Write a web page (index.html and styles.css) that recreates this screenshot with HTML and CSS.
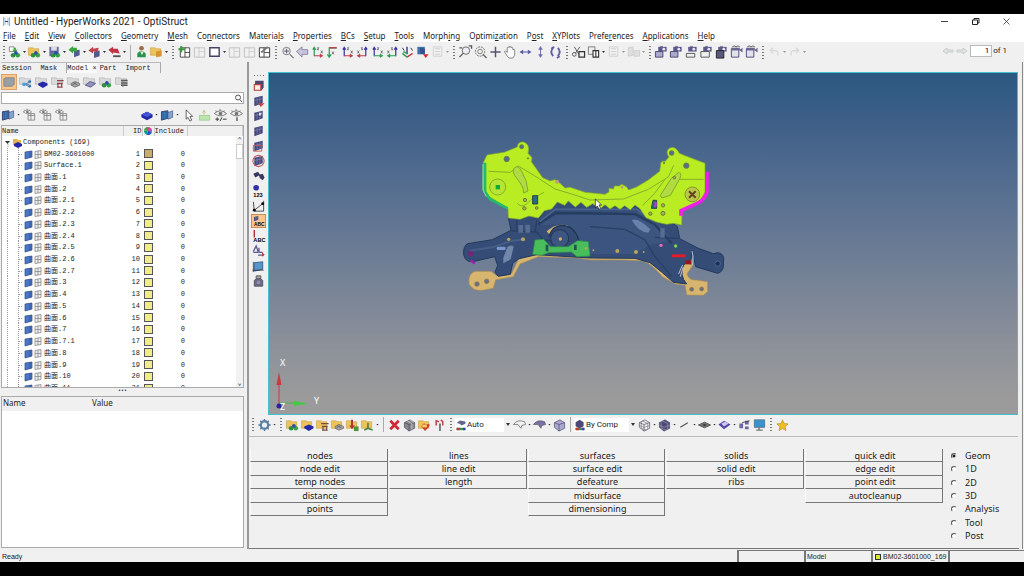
FILE: index.html
```html
<!DOCTYPE html>
<html lang="en">
<head>
<meta charset="utf-8">
<title>Untitled - HyperWorks 2021 - OptiStruct</title>
<link rel="stylesheet" href="styles.css">
</head>
<body>
<div class="app">
  <header class="titlebar">
    <svg class="logo" viewBox="0 0 9 9"><path d="M1.500 0v9M3 1v7M6 1v7M7.500 0v9" stroke="#8fb3da"/><path d="M3 4.500h3" stroke="#243f70"/></svg>
    <h1 class="title">Untitled - HyperWorks 2021 - OptiStruct</h1>
    <div class="window-buttons">
      <button aria-label="Minimize"><svg viewBox="0 0 9 9"><path d="M1 4.500h7" stroke="#444"/></svg></button>
      <button aria-label="Restore"><svg viewBox="0 0 9 9"><path d="M1.500 3h5v4.500h-5zM3 3V1.500h5V6H6.500" fill="none" stroke="#222"/></svg></button>
      <button aria-label="Close"><svg viewBox="0 0 9 9"><path d="M1.500 1.500l6 6m0-6l-6 6" stroke="#333" stroke-width=".8"/></svg></button>
    </div>
  </header>
  <nav class="menubar">
    <button><u>F</u>ile</button><button><u>E</u>dit</button><button><u>V</u>iew</button><button><u>C</u>ollectors</button><button><u>G</u>eometry</button><button><u>M</u>esh</button><button>Co<u>n</u>nectors</button><button>Materia<u>l</u>s</button><button><u>P</u>roperties</button><button><u>B</u>Cs</button><button><u>S</u>etup</button><button><u>T</u>ools</button><button>Morph<u>i</u>ng</button><button>Optimi<u>z</u>ation</button><button>P<u>o</u>st</button><button><u>X</u>YPlots</button><button>Prefe<u>r</u>ences</button><button><u>A</u>pplications</button><button><u>H</u>elp</button>
  </nav>
  <div class="main-toolbar">
    <div class="toolbar" data-tools="| new+ open+ save+ import+ export+ exportred+ / user folder+ | pageadd pagedim window+ pagedim pagedim pageedit | zoomfit back axgr axrg axrg2 axrp axbg axgb axiso cube dim+ | mag magdots cross hand lr ud rot | cut paste+ dim+ dimdb+ | cam1 cam1 cam2 cam3 cam4 vid vid | undo+ redo+"></div>
    <div class="pager">
      <svg viewBox="0 0 26 10"><path d="M5 2L1 5l4 3V6h6V4H5zM21 2l4 3-4 3V6h-6V4h6z" fill="#e3e6e4" stroke="#c6ccc8"/></svg>
      <label><input type="text" value="1" aria-label="Page"> of 1</label>
    </div>
  </div>
  <div class="workspace">
    <aside class="browser">
      <div class="tabs" role="tablist"><button>Session</button><button>Mask</button><button class="active">Model ×</button><button>Part</button><button>Import</button></div>
      <div class="toolbar views" data-tools="boxsel share compg matg meshg surfg ballsg stackg"></div>
      <div class="search"><input type="text" aria-label="Search"><svg viewBox="0 0 9 9"><circle cx="4" cy="3.500" r="2.500" fill="none" stroke="#555"/><path d="M6 5.500L8 8" stroke="#555"/></svg></div>
      <div class="filters">
        <div class="toolbar" data-tools="shell+ eyelist eyelist eyelist"></div>
        <div class="toolbar" data-tools="blue+ shell+ arrow green eyepm eye1"></div>
      </div>
      <div class="tree">
        <table>
          <thead><tr><th class="c-name">Name</th><th class="c-id">ID</th><th class="c-color"><svg viewBox="0 0 9 9" aria-label="Color"><path d="M4.500 4.500V0A4.500 4.500 0 0 1 9 5z" fill="#d743a1"/><path d="M4.500 4.500L9 5A4.500 4.500 0 0 1 3 8.700z" fill="#2556c8"/><path d="M4.500 4.500L3 8.700A4.500 4.500 0 0 1 0 4z" fill="#159d8b"/><path d="M4.500 4.500L0 4A4.500 4.500 0 0 1 4.500 0z" fill="#3fa338"/></svg></th><th class="c-inc">Include</th><th></th></tr></thead>
          <tbody id="rows"></tbody>
        </table>
        <div class="scroll"><span>⌃</span><i></i><span>⌄</span></div>
      </div>
      <div class="split"><span>•••</span></div>
      <div class="props"><div class="props-head"><span>Name</span><span>Value</span></div></div>
    </aside>
    <main class="stage">
      <div class="view-row">
        <div class="toolbar vertical" data-tools="- vbox vcam vp vgrid vredbox vcirc vbinoc vinfo vmeas vabc vredabc vabcd vblue vlock"></div>
        <div class="viewport">
          <svg viewBox="269 73 748 341" role="img" aria-label="Subframe model">
            <g transform="translate(455 130) scale(.333333)">
              <path d="M240 372L190 388L170 430L125 437L108 424L60 424Q38 432 42 462Q55 485 82 481L115 475L122 450L175 440L195 402L250 380L370 384L405 390L505 390L565 393Q590 402 622 440L660 462L690 466L695 495L745 496L758 485V455L724 450Q702 452 696 432L714 405L690 398L560 374Z" fill="#d7b56e" stroke="#a58958" stroke-width="2"/>
              <g fill="#66707f" stroke="#917950" stroke-width="2"><circle cx="66" cy="462" r="7"/><circle cx="95" cy="454" r="7"/><circle cx="710" cy="478" r="6"/><circle cx="740" cy="477" r="6"/></g>
              <path d="M38 341L112 329L168 301L160 262L260 236L300 205H560L640 270L667 290L674 326L730 355L775 371Q800 362 806 383L805 408Q805 424 788 430L722 410L711 362L708 388L686 405Q672 435 695 462L655 457L620 426L585 398L540 385L405 384L245 374L192 386L173 400L166 433L130 439L120 427L128 406L119 380L58 394Q32 400 26 374Q24 348 38 341Z" fill="#344c76" stroke="#22385c" stroke-width="3"/>
              <path d="M250 285L300 245H560L620 290L650 330L585 345L540 372H405L373 341Q360 290 325 284Z" fill="#3b5580"/>
              <path d="M43 362L112 352L168 333L210 328" fill="none" stroke="#465d86" stroke-width="6"/>
              <path d="M250 283L302 249L540 252L600 284L650 340" fill="none" stroke="#263c60" stroke-width="7"/>
              <path d="M255 274L300 238H545L605 275" fill="none" stroke="#49638f" stroke-width="5"/>
              <path d="M165 302L245 306L265 330L370 335M185 270V300M246 270L240 304M405 290L510 298L570 330L600 380L650 440M600 322L670 325" fill="none" stroke="#293f63" stroke-width="4"/>
              <path d="M190 285h14v23h-14zM211 284h14v24h-14zM616 295h13v28h-13z" fill="#566c91"/>
              <path d="M530 270Q550 262 586 298L580 308Q550 307 530 270Z" fill="#6982ab"/>
              <path d="M157 352Q168 342 176 350L167 388L145 400V383Z" fill="#7187aa"/>
              <rect x="125" y="350" width="27" height="10" rx="4" fill="#7997cb"/>
              <path d="M275 304Q302 278 338 286L337 293L281 311Z" fill="#d5b36e"/>
              <path d="M282 320Q292 285 325 286Q365 291 373 341" fill="#344b73" stroke="#1f3453" stroke-width="4"/>
              <circle cx="314" cy="326" r="27" fill="#3d5681" stroke="#1e3355" stroke-width="3"/><circle cx="316" cy="327" r="5" fill="#cbb16f"/>
              <path d="M240 330L266 328L286 350L340 350L368 332L400 335L405 378L366 380L349 366L280 368L261 376L233 373Z" fill="#48bd59" stroke="#289448" stroke-width="2"/>
              <path d="M272 344h8v20h-8zM357 344h8v16h-8z" fill="#274f58"/>
              <path d="M85 98L96 75L120 71L148 67L187 51Q188 35 205 36Q226 42 219 70L231 83L229 95L263 143L285 153L300 149L315 160L330 174L345 172L390 187L450 193L462 186V175L476 177L478 168H493L500 163L514 170L521 180L545 171L580 150L614 124L617 105Q616 91 631 94L642 81Q630 65 643 55Q661 46 673 70L687 76L750 100V187L735 214L681 245L680 285L655 280L635 283L607 277L573 263L555 236L540 225L526 239L509 227L495 238L480 227L465 237L450 224L435 237L413 221L395 232L378 217L361 231L340 213L329 226L307 216L290 237L268 242L250 264L222 258L195 268L160 264L159 235L91 193L84 180Z" fill="#b9ec22" stroke="#86ad29" stroke-width="2"/>
              <path d="M90 98V184L104 207L158 235" fill="none" stroke="#20bb6d" stroke-width="8"/><path d="M84 103V180L94 200" fill="none" stroke="#7ae5a3" stroke-width="3"/>
              <path d="M756 125V186Q750 209 726 220L678 242V257" fill="none" stroke="#ed20eb" stroke-width="11"/>
              <path d="M101 124L166 127L190 108L243 140L300 177L350 192L405 210L505 207L580 178L640 141L656 106M663 148H746M187 220Q202 240 228 209L267 187M563 226L598 191L630 148" fill="none" stroke="#86b02a" stroke-width="3"/>
              <path d="M180 112Q170 121 179 137Q208 170 206 189L219 183Q217 152 199 122Q190 106 180 112ZM670 128Q681 126 675 145L646 196L620 204L616 196L649 145Z" fill="#b2db43" stroke="#83a92a" stroke-width="3"/>
              <circle cx="128" cy="171" r="24" fill="#b7e536" stroke="#86ad2b" stroke-width="3"/><path d="M122 165h13v13h-13z" fill="#0eab35"/>
              <circle cx="712" cy="193" r="22" fill="#bcc749" stroke="#809a27" stroke-width="3"/><path d="M702 184l20 19m0-19l-20 19" stroke="#624224" stroke-width="6"/>
              <g fill="#526c99" stroke="#6c823b" stroke-width="3"><circle cx="155" cy="87" r="8"/><circle cx="200" cy="50" r="6"/><circle cx="650" cy="69" r="7"/><circle cx="694" cy="107" r="8"/><circle cx="219" cy="85" r="2"/><circle cx="627" cy="99" r="2"/></g>
              <path d="M233 197h15v25h-15zM594 211h11v24h-16z" fill="#296b87" stroke="#264742" stroke-width="3"/><path d="M599 216h6v15h-8z" fill="#b13ec4"/>
              <g fill="#b2ab60" stroke="#617d2c" stroke-width="3"><circle cx="210" cy="210" r="5"/><circle cx="208" cy="235" r="5"/><circle cx="245" cy="234" r="4"/><circle cx="624" cy="226" r="5"/><circle cx="586" cy="251" r="5"/><circle cx="624" cy="250" r="6"/><circle cx="658" cy="143" r="4"/></g>
              <g fill="#be9b82"><circle cx="306" cy="155" r="6"/><circle cx="501" cy="172" r="4"/></g>
              <g fill="#b8a55c"><circle cx="161" cy="328" r="5"/><circle cx="204" cy="328" r="6"/><circle cx="393" cy="355" r="4"/><circle cx="487" cy="363" r="6"/><circle cx="543" cy="366" r="6"/><circle cx="415" cy="361" r="3"/><circle cx="566" cy="366" r="3"/></g>
              <circle cx="47" cy="371" r="8" fill="#772478"/><path d="M47 391l12 10" stroke="#a31cac" stroke-width="7"/>
              <path d="M651 373h40v9h-40z" fill="#e31b28"/><path d="M691 391h17v12h-17z" fill="#9b1521"/>
              <circle cx="662" cy="348" r="5" fill="#79d45b"/><circle cx="618" cy="346" r="5" fill="#e06cb3"/>
              <circle cx="788" cy="401" r="8" fill="#1d3154" stroke="#5d7aaa" stroke-width="2"/>
              <path d="M671 432q7-18 12-27M676 440q5-19 9-29M711 363q6 15 1 42" fill="none" stroke="#b9c5ce" stroke-width="3"/>
              <path d="M421 207v27l6-6 5 10 5-3-5-10h8z" fill="#fff" stroke="#111" stroke-width="2"/>
            </g>
            <g class="axis"><path d="M279 405V384" stroke="#c83b41"/><path d="M276.500 385L279 372L281.500 385Z" fill="#c83b41"/><path d="M280 403H298" stroke="#47b747"/><path d="M294 401L308 403.500L294 406Z" fill="#46c943"/><circle cx="279" cy="406" r="2.500" fill="#23239b"/><text x="280" y="366">X</text><text x="314" y="404">Y</text><text x="280" y="410">Z</text></g>
          </svg>
        </div>
      </div>
      <div class="lower-toolbar">
        <div class="toolbar" data-tools="| gear+ | balls fblue fmat fmesh fred faxis+ / delete cubes fheart bones |"></div>
        <label class="combo"><svg viewBox="0 0 15 15"><path d="M2 5l4-3 7 1v3L8 8 6 6z" fill="#63648f"/><path d="M2 11h11v3H2z" fill="#3a934b"/><path d="M2 11h4v3H2z" fill="#c33"/><path d="M10 11h3v3h-3z" fill="#34b"/></svg><select aria-label="Shading"><option>Auto</option></select></label>
        <div class="toolbar" data-tools="plate+ platef+ cubef /"></div>
        <label class="combo wide"><svg viewBox="0 0 15 15"><path d="M2 4l5-3 5 3v5l-5 3-5-3z" fill="#4a4876"/><path d="M2 11h11v3H2z" fill="#3a934b"/><path d="M2 11h4v3H2z" fill="#c33"/><path d="M10 11h3v3h-3z" fill="#34b"/></svg><select aria-label="Color mode"><option>By Comp</option></select></label>
        <div class="toolbar" data-tools="wire+ wiref+ line+ shrink+ layer+ multi monitor | star"></div>
      </div>
      <div class="panel">
        <div class="panel-grid">
          <div><button>nodes</button><button>node edit</button><button>temp nodes</button><button>distance</button><button>points</button></div>
          <div><button>lines</button><button>line edit</button><button>length</button></div>
          <div><button>surfaces</button><button>surface edit</button><button>defeature</button><button>midsurface</button><button>dimensioning</button></div>
          <div><button>solids</button><button>solid edit</button><button>ribs</button></div>
          <div><button>quick edit</button><button>edge edit</button><button>point edit</button><button>autocleanup</button></div>
        </div>
        <div class="pages">
          <label><input type="radio" name="page" checked>Geom</label><label><input type="radio" name="page">1D</label><label><input type="radio" name="page">2D</label><label><input type="radio" name="page">3D</label><label><input type="radio" name="page">Analysis</label><label><input type="radio" name="page">Tool</label><label><input type="radio" name="page">Post</label>
        </div>
      </div>
    </main>
  </div>
  <footer class="status"><span class="ready">Ready</span><span class="cell"></span><span class="cell">Model</span><span class="cell current"><i></i>BM02-3601000_169</span><span class="cell"></span></footer>
</div>
<script src="app.js"></script>
</body>
</html>
```

FILE: styles.css
```css
* { box-sizing: border-box; }
body { margin: 0; height: 100vh; padding: 14px 0; background: #000; color: #222; font: 9px/12px "Noto Sans", "Open Sans", sans-serif; overflow: hidden; }
button { border: 0; padding: 0; margin: 0; background: none; color: inherit; font: inherit; }
svg { display: block; }
.app { height: 100%; display: flex; flex-direction: column; background: #f0f0f0; }

.titlebar { display: flex; align-items: center; height: 15px; padding: 0 13px 0 2px; gap: 3px; background: #fff; }
.logo { width: 9px; height: 9px; }
.title { flex: 1; margin: 0; font: 10px/15px Roboto, sans-serif; }
.window-buttons { display: flex; gap: 22px; }
.window-buttons svg { width: 9px; height: 9px; }
.menubar { display: flex; gap: 9px; height: 13px; padding-left: 3px; background: #fff; white-space: nowrap; font: 8px/13px "Noto Sans", sans-serif; }
.menubar u { text-underline-offset: 1px; }

.main-toolbar { display: flex; justify-content: space-between; height: 20px; }
.toolbar { display: flex; align-items: center; }
.tool { display: flex; align-items: center; }
.tool svg { width: 15px; height: 14px; }
.tool.drop::after { content: ""; width: 3px; height: 2px; margin: 0 1px; background: #333; clip-path: polygon(0 0, 100% 0, 50% 100%); }
.tool.dim { opacity: .45; }
.grip { width: 8px; height: 13px; background: radial-gradient(circle, #777 0 1px, transparent 1px) center / 2px 3px repeat-y; }
.main-toolbar .grip:first-child { width: 7px; }
.sep { width: 7px; height: 15px; background: linear-gradient(#aaa, #aaa) center / 1px 100% no-repeat; }
.pager { display: flex; align-items: flex-start; gap: 2px; padding: 3px 17px 0 0; font: 8px/12px Roboto, sans-serif; }
.pager svg { width: 26px; height: 12px; }
.pager label { display: flex; gap: 1px; }
.pager input { width: 22px; height: 12px; padding: 0 2px; border: 1px solid #bbb; background: #fff; text-align: right; font: inherit; }

.workspace { flex: 1; min-height: 0; display: flex; border-right: 1px solid #888; margin-right: 1px; }
.browser { width: 249px; flex: none; display: flex; flex-direction: column; padding: 0 3px 0 1px; border-right: 2px solid #999; font: 7px/11px "Liberation Mono", "Noto Sans CJK SC", monospace; }
.tabs { display: flex; gap: 9px; height: 11px; width: 160px; padding-left: 1px; border-top: 1px solid #bbb; border-right: 1px solid #aaa; }
.tabs .active { background: #fafafa; border-left: 1px solid #aaa; margin-right: -6px; }
.views { height: 18px; gap: 1px; }
.views .tool:first-child { height: 16px; border: 1px solid #d9a46c; background: #fac68b; }
.views .tool:first-child svg { width: 14px; }
.search { display: flex; align-items: center; height: 12px; margin-top: 1px; border: 1px solid #aaa; background: #fff; }
.search input { flex: 1; min-width: 0; height: 10px; border: 0; font: inherit; outline: 0; }
.search svg { width: 9px; height: 9px; }
.filters { display: flex; justify-content: space-between; align-items: center; height: 21px; }
.filters .toolbar { gap: 1px; }
.tree { position: relative; height: 263px; overflow: hidden; border: 1px solid #aaa; background: #fff; }
.tree table { width: 100%; height: 268px; border-collapse: collapse; table-layout: fixed; }
.tree th { height: 10px; padding: 0; border-right: 1px solid #ccc; background: #f0f0f0; font-weight: 400; line-height: 10px; text-align: left; }
.tree td { padding: 0; line-height: 10px; white-space: nowrap; }
.c-name { width: 121px; }
.tree .c-id { width: 19px; text-align: right; }
.c-color { width: 12px; }
.c-color svg { width: 8px; height: 8px; margin: auto; }
.c-inc { width: 33px; }
.tree .num { text-align: right; padding-right: 2px; }
.name { display: flex; align-items: center; height: 10px; }
.name svg { width: 42px; height: 12px; flex: none; }
.name.root svg { width: 21px; }
.swatch { display: block; width: 9px; height: 9px; margin: auto; border: 1px solid #555; background: #f1ec8a; }
.swatch.tan { background: #c9ad6b; }
.scroll { position: absolute; inset: 11px 0 0 auto; width: 7px; display: flex; flex-direction: column; background: #f2f2f2; line-height: 7px; text-align: center; }
.scroll i { height: 15px; border: 1px solid #ccc; background: #fff; }
.scroll span:last-child { margin-top: auto; }
.split { height: 8px; line-height: 6px; font-size: 5px; text-align: center; }
.props { flex: 1; margin-bottom: 1px; border: 1px solid #aaa; background: #fff; }
.props-head { display: grid; grid-template-columns: 89px 1fr; height: 14px; padding-left: 1px; background: #f0f0f0; font: 8px/12px "Noto Sans", sans-serif; }

.stage { flex: 1; min-width: 0; display: flex; flex-direction: column; }
.view-row { flex: 1; min-height: 0; display: flex; padding: 10px 4px 0 0; }
.vertical { flex-direction: column; gap: 1px; width: 19px; padding-top: 2px; }
.dots { width: 12px; height: 4px; background: radial-gradient(circle, #777 0 1px, transparent 1px) left top / 3px 3px repeat-x; }
.vertical .tool.vabc { border: 1px solid #c88d58; background: #fac68b; }
.vertical .tool.vabc svg { width: 13px; height: 12px; }
.viewport { flex: 1; min-width: 0; border: 1px solid #45bfd0; background: linear-gradient(#2b587f, #3e5f88 14%, #5f7493 42%, #8a8f99 78%, #9b9b9b 95%); }
.viewport svg { width: 100%; height: 100%; }
.axis text { font: 9px "Noto Sans", sans-serif; fill: #fff; }
.lower-toolbar { display: flex; align-items: center; height: 22px; padding-bottom: 2px; margin-right: 4px; border-bottom: 1px solid #bbb; }
.combo { display: flex; align-items: center; }
.combo svg { width: 12px; height: 14px; background: #fff; }
.combo select { appearance: none; width: 37px; height: 14px; padding: 0; border: 0; border-radius: 0; background: #fff; font: 8px/14px Roboto, sans-serif; color: #222; }
.combo.wide select { width: 43px; }
.combo::after { content: ""; width: 4px; height: 3px; margin: 0 2px 0 2px; background: #333; clip-path: polygon(0 0, 100% 0, 50% 100%); }

.panel { display: flex; margin-right: 3px; height: 112px; padding: 12px 0 0 1px; border-bottom: 1px solid #777; }
.panel-grid { flex: 1; display: grid; grid-template-columns: repeat(5, 1fr); gap: 1px; height: 67px; }
.panel-grid div { display: grid; grid-template-rows: repeat(5, 1fr); }
.panel-grid button { padding-left: 2px; border-right: 1px solid #777; border-bottom: 1px solid #777; border-left: 1px solid #fafafa; line-height: 11px; }
.pages { width: 76px; height: 94px; padding-left: 8px; display: grid; grid-template-rows: repeat(7, 1fr); }
.pages label { display: flex; align-items: center; gap: 8px; line-height: 12px; }
.pages input { appearance: none; width: 6px; height: 6px; margin: 0; border: 1px solid; border-color: #555 #eee #eee #555; border-radius: 50%; background: #fff; }
.pages input:checked { background: radial-gradient(circle, #222 1px, #fff 2px); }

.status { display: flex; height: 13px; padding: 1px 0 0 2px; font: 7px/12px "Liberation Sans", sans-serif; }
.ready { flex: 1; padding-top: 1px; }
.cell { width: 67px; padding-left: 1px; border-top: 1px solid #777; border-left: 2px solid #777; }
.current { display: flex; align-items: center; gap: 2px; width: 77px; padding-left: 2px; }
.current i { width: 6px; height: 6px; border: 1px solid #333; background: #d6e72d; }
.cell:last-child { width: 76px; }
```

FILE: app.js
```js
const p = (d, fill, stroke = 'none', w = 1) => `<path d="${d}" fill="${fill}" stroke="${stroke}" stroke-width="${w}"/>`;
const folder = p('M1 3h5l1 1h5v7H1z', '#edc35c', '#c99a3c', .6);
const grayFolder = p('M1 3h5l1 1h6v6H1z', '#d9d9d9', '#aaa', .6);
const balls = '<circle cx="6" cy="11" r="2.500" fill="#2b913b"/><circle cx="11" cy="11" r="2.500" fill="#37a546"/><circle cx="9" cy="8.500" r="2" fill="#304ba5"/>';
const bluePlate = p('M4 9l5-2 5 2v2l-5 3-5-3z', '#2529a8');
const mesh = p('M5 9l4-2 5 2v2l-5 2-4-2zM7 8l5 3M11 8l-5 3', '#aaa', '#555', .7);
const grid = p('M3 4l9-2v8l-9 3z', '#45477c') + p('M6 4v7M9 3v8M3 7l9-2', 'none', '#8589b4', .7);
const axis = (a, b, flip) => `<g ${flip ? 'transform="translate(15 0) scale(-1 1)"' : ''}>${p('M4 12V3M2.500 5L4 2.500 5.500 5', 'none', a, 1.3)}${p('M4 11.500h8M10 10l2.500 1.500L10 13', 'none', b, 1.3)}${p('M7 3h2L7 5h2M11 6l2 3m0-3l-2 3', 'none', '#444', .7)}</g>`;
const eye = p('M1 6q6-6 13 0q-6 5-13 0M2 3l2 1M7 1v2M12 3l-2 1', 'none', '#777') + '<circle cx="7.500" cy="6" r="2" fill="#777"/>';
const camera = p('M4 2h9v5H4z', '#5c588d') + p('M6 2V1h3v1', '#777') + '<circle cx="10" cy="4.500" r="1.500" fill="#e6e6f0"/>';
const cube = f => p('M2 5l6-3 5 3v6l-6 3-5-4z', f, '#48466c', .7) + p('M2 5l5 2 6-2M7 7v7', 'none', '#48466c', .7);
const page = p('M2 3h11v10H2z', 'none', '#888') + p('M7 3v10M7 7h6', 'none', '#888', .7);
const plate = f => p('M1 7q4-6 12-3l1 3-4 1-1 3-3-4z', f, '#555', .7);
const video = p('M2 4h8v9H2z', '#e2e2ed', '#4c4978') + p('M2 3h9v3H2zM11 5l3-2v5l-3-2z', '#6a668f') + p('M3 2l2-1 2 1 2-1 2 1', 'none', '#555');
const icons = {
  new: p('M2 2h5v5H2z', '#fff', '#888') + p('M7 3h2v2h2L8 8 5 5h2z', '#43a439') + balls,
  open: folder + balls,
  save: p('M2 2h10v10H2z', '#68699e') + p('M4 2h6v4H4z', '#ddd') + p('M4 9h6v3H4z', '#ccc') + balls,
  import: p('M7 6l6-1v6l-6 2z', '#52598f') + p('M1 5l5-4v2h4v4H6v2z', '#38a43a'),
  export: p('M7 7l6-1v6l-6 2z', '#52598f') + p('M1 6l5-4v2l6-1-1 4H6v2z', '#c43d4b'),
  exportred: p('M1 5l5-3v2h5l2 5-7-1v2z', '#bf3143') + p('M6 12h8', 'none', '#555', 2),
  user: '<circle cx="7.500" cy="3.500" r="2.500" fill="#9c6a43"/>' + p('M3 13V9q4-5 9 0v4z', '#23944c') + p('M6 7l2 4 2-4z', '#e2e9dc'),
  folder: folder + p('M7 7l6-1v6l-6 1z', '#d7932e'),
  pageadd: p('M3 3h10v10H3z', '#fff', '#444') + p('M8 3v10M8 8h5', 'none', '#444') + p('M4 1v7M1 4.500h7', 'none', '#3d983c', 2),
  pagedim: page, window: p('M2.500 3h10v9h-10z', '#fff', '#454164', 1.5),
  pageedit: p('M2 3h11v10H2z', '#fff', '#333') + p('M7 3v10M7 8h6', 'none', '#444') + p('M4 8l7-6', 'none', '#777', 2),
  zoomfit: '<circle cx="6.500" cy="6.500" r="4" fill="none" stroke="#777"/>' + p('M10 10l4 4M4 6.500h5M6.500 4v5', 'none', '#6a6885', 1.2),
  back: p('M1 7l6-5v3h6v5H7v3z', '#c8c5df', '#8783a5'),
  axgr: axis('#2a9e53', '#c23a4b'), axrg: p('M12 3H4v9M2 10l2 3 2-3', 'none', '#2a9e53', 1.3) + p('M4 3h8', 'none', '#c23a4b', 1.5) + p('M7 7l2 3m0-3l-2 3', 'none', '#444', .7),
  axrg2: axis('#3934a0', '#c23a4b'), axrp: axis('#3934a0', '#c23a4b', 1), axbg: axis('#3934a0', '#2a9e53'), axgb: axis('#3934a0', '#2a9e53', 1),
  axiso: p('M7 10V2', 'none', '#3934a0', 1.5) + p('M7 9L3 7M7 13L2 9', 'none', '#2a9e53', 1.5) + p('M7 13l6-4', 'none', '#c23a4b', 1.5) + p('M2 3l2 3M11 3l2 3', 'none', '#333'),
  cube: p('M2 2h8v8H2z', '#3973ad') + p('M5 3l5 1v6l-5-1z', '#395088') + p('M8 10h6l-3 4z', '#d62b31'),
  dim: p('M3 2h9v10H3zM5 4h5M5 7h5M5 10h5', 'none', '#aaa'),
  mag: '<circle cx="8" cy="6" r="4" fill="#ececf5" stroke="#666"/>' + p('M5 9l-4 4M1 3h3M11 1h3v3', 'none', '#555', 1.4),
  magdots: '<circle cx="7" cy="7" r="5" fill="none" stroke="#666" stroke-dasharray="2 1"/><circle cx="7" cy="7" r="2.500" fill="none" stroke="#777"/>' + p('M10 10l4 4', 'none', '#666', 1.5),
  cross: p('M7.500 2v11M2 7.500h11', 'none', '#57556c', 1.6),
  hand: p('M4 12L1 7q1-2 3 1V3q1-2 2 0V2q1-2 2 0v1q1-1 2 0v2q2-1 2 1v5l-2 3H6z', '#fafafa', '#666', .8),
  lr: p('M1 7.500L5 5v2h5V5l4 2.500L10 10V8H5v2z', '#5c58a4'), ud: p('M7.500 1L5 5h2v5H5l2.500 4L10 10H8V5h2z', '#706eb0'),
  rot: p('M5 3q-4 4 0 9M10 3q4 4 0 9M3 4l3-2M12 12l-3 2', 'none', '#625fa8', 2),
  cut: p('M3 2l5 8M9 2L4 9', 'none', '#555') + '<circle cx="3" cy="10" r="2" fill="none" stroke="#555"/>' + p('M8 7h6v6H8z', '#eee', '#333', 1.3),
  paste: p('M2 2h7v8H2z', '#eee', '#777') + p('M7 6h6v7H7zM10 6v7', '#fff', '#333', 1.2),
  dimdb: p('M2 3l5-1v9l-5 1zM8 6h6v6H8z', '#ccc', '#aaa'),
  cam1: camera + p('M1 7h8v6H1z', '#aaaacc', '#49466e'), cam2: camera + p('M2 9h9v4H2z', '#eee', '#555'), cam3: camera + p('M1.500 7h9v6h-9z', 'none', '#555'), cam4: camera + p('M2 6h8v8H2z', '#5b597c', '#222'), vid: video,
  undo: p('M3 6h5q4 0 3 5M6 3L3 6l3 3', 'none', '#bbb', 1.4), redo: p('M12 6H7Q3 6 4 11M9 3l3 3-3 3', 'none', '#bbb', 1.4),
  boxsel: p('M2 4l2-1h9v7l-2 2H2z', '#999fa4', '#888'),
  share: grayFolder + p('M12 7L7 10l5 3M7 10h4', 'none', '#4d78b4') + '<circle cx="6" cy="10" r="2" fill="#49a2d2"/><circle cx="12" cy="7" r="1.500" fill="#3475b5"/><circle cx="12" cy="12" r="1.500" fill="#3475b5"/>',
  compg: grayFolder + bluePlate, matg: grayFolder + p('M7 6h7M8 9v4M12 9v4M7 9h6M7 13h6', 'none', '#94434c', 1.3), meshg: grayFolder + mesh, surfg: grayFolder + p('M3 11l5-4 6 2-5 4z', '#9293b9', '#5d5e92'), ballsg: grayFolder + balls, stackg: grayFolder + p('M7 6h7M7 8.500h7M7 11h7', 'none', '#555', 1.6) + p('M9 5v8', 'none', '#777'),
  shell: p('M1 4l7-1v8l-7 2z', '#397ab8', '#333b6e') + p('M8 5l5-2v7l-5 2z', '#82a5d2', '#46527e', .7) + p('M3 4v8M6 3v8', 'none', '#2c4f8c', .7),
  eyelist: `<g transform="scale(.7)">${eye}</g>` + p('M6 6h7v7H6zM6 8h7M9 6v7', '#eee', '#777', .8),
  blue: p('M2 7l6-3 6 3v3l-6 3-6-3z', '#2229a2') + p('M2 7l6-3 6 3-6 3z', '#4452d8'),
  arrow: p('M5 2v10l2-2 2 4 2-1-2-4h3z', '#fff', '#333', .8), green: p('M2 8h11v5H2z', '#bee5ac', '#9fcc96') + p('M7 2v5M5 5l2-2 2 2', 'none', '#c7bd7b'),
  eyepm: eye + p('M2 12h4M4 10v4M10 12h4M7 14l2-4', 'none', '#333'), eye1: eye + p('M8 10v4', 'none', '#333', 1.2),
  vbox: p('M4 2h9v7l-2 3H3z', '#4b4770') + p('M3 6h7v6H3z', '#fff0e6', '#b54538', 1.2), vcam: grid + p('M7 10h7l-4 4z', '#c94343'), vp: grid + p('M8 4h3l-1 3H8z', '#ddd'), vgrid: grid,
  vredbox: grid + p('M2 7h9v6H2z', 'none', '#bf5852'), vcirc: grid + '<circle cx="7.500" cy="7.500" r="6" fill="none" stroke="#c65f61" stroke-width="1.200"/>',
  vbinoc: p('M2 5l5-2 2 3 3-1 2 4-2 3-3-2-1-3-2 1-2 1z', '#383960'), vinfo: '<circle cx="5" cy="4" r="3" fill="#2e31a8"/><text x="2" y="14" font-size="6" font-weight="bold" font-family="Liberation Sans">123</text>',
  vmeas: p('M2 3l1 10h10L13 2M3 12l9-7', 'none', '#444') + '<circle cx="3" cy="12" r="1.500"/><circle cx="12" cy="5" r="1.500"/>',
  vabc: `<g transform="scale(.6)">${grid}</g>` + '<text x="2" y="14" font-size="6" font-weight="bold" font-family="Liberation Sans">ABC</text>',
  vredabc: p('M3 1v8', 'none', '#b43246', 1.5) + '<text x="2" y="14" font-size="6" font-weight="bold" font-family="Liberation Sans">ABC</text>',
  vabcd: p('M2 8l3-6 2 6M2 9h5M8 4v5h4M7 12h6', 'none', '#555b8d', 1.4) + p('M11 9l3 2-2 3z', '#c33'),
  vblue: p('M3 4l9-1v8l-9 2z', '#5797ca', '#31608f') + p('M2 3v11M1 12h12', 'none', '#333', .8), vlock: p('M5 5V2h5v3', '#aaa', '#555') + p('M3 7l2-2h5l2 2v6H3z', '#68698c', '#555') + '<circle cx="7.500" cy="9" r="2" fill="#8e8fa6"/>',
  gear: '<circle cx="7.500" cy="7.500" r="4" fill="none" stroke="#668aaa" stroke-width="2.500"/>' + p('M7.500 1v3M7.500 11v3M1 7.500h3M11 7.500h3M3 3l2 2M12 3l-2 2M3 12l2-2M12 12l-2-2', 'none', '#54799d', 1.5),
  balls: folder + balls, fblue: folder + bluePlate, fmat: folder + p('M6 6h8M8 9v4M12 9v4M7 9h6M7 13h6', 'none', '#754d45', 1.3), fmesh: folder + mesh,
  fred: folder + p('M7 2v7', 'none', '#ad3030', 2) + p('M4 8h6l-3 4z', '#b92d2d') + p('M9 9h5v5H9z', '#51953b'), faxis: folder + p('M8 5v6l5 2M8 11l-4 2', 'none', '#467b40', 1.6),
  delete: p('M3 3l9 9M12 3l-9 9', 'none', '#cf2938', 3), cubes: cube('#888') + p('M5 3l5 3v6M8 2l4 3', 'none', '#ddd', .7), fheart: folder + p('M4 9q2-5 5-2 6-2 3 3l-4 4z', '#d44128') + p('M5 7h5v3H5z', '#f4ce67'),
  bones: p('M8 6v8', 'none', '#777', 2) + p('M4 8V3l3 1M11 8V4L9 2', 'none', '#c44b53', 1.8),
  plate: plate('#f2f2f2'), platef: plate('#7774aa'), cubef: cube('#aaa8d0'), wire: cube('#f0f0f0') + p('M4 4v7l6 2M5 3l6 3v6M2 8l5 2 6-2', 'none', '#777', .7), wiref: cube('#4e4b80') + p('M4 4v7l6 2M5 3l6 3v6M2 8l5 2 6-2', 'none', '#aaa', .6),
  line: p('M3 10l8-5', 'none', '#555', 1.2), shrink: p('M1 7.500l6.500-3 6.500 3-6.500 3z', '#777', '#555') + p('M5 7.500l2.500-1 2.500 1-2.500 1z', '#333'), layer: p('M1 7l6-4 7 4-7 5z', '#4f46a2') + p('M4 6l4-2 4 2-5 3z', '#ccc8f0'),
  multi: p('M2 6h4v5H2zM8 3h4v4H8zM8 9h4v3H8z', '#6c68a5') + p('M5 5l8-2', 'none', '#444'), monitor: p('M2 2h11v8H2z', '#3794cf', '#56768f') + p('M7 10v3M4 13h7', 'none', '#777', 1.5), star: p('M7.500 2l1.700 3.800 4.300.5-3.200 2.900.9 4.300-3.700-2.200-3.700 2.200.9-4.300L1.500 6.300l4.300-.5z', '#efbf22', '#b98f1e', .7)
};

document.querySelectorAll('[data-tools]').forEach(bar => {
  bar.innerHTML = bar.dataset.tools.split(' ').map(t => {
    if (t === '|') return '<span class="grip"></span>';
    if (t === '/') return '<span class="sep"></span>';
    if (t === '-') return '<span class="dots"></span>';
    const name = t.replace('+', '');
    const dim = /^(pagedim|dim|dimdb|undo|redo)$/.test(name) ? ' dim' : '';
    return `<button class="tool ${name}${t.endsWith('+') ? ' drop' : ''}${dim}" aria-label="${name}"><svg viewBox="0 0 15 15">${icons[name]}</svg></button>`;
  }).join('');
});

const names = ['BM02-3601000', 'Surface.1', ...['1', '2', '2.1', '2.2', '2.3', '2.4', '2.5', '2.6', '2.7', '3', '4', '5', '6', '7', '7.1', '8', '9', '10', '11'].map(n => '曲面.' + n)];
const root = '<svg viewBox="0 0 21 12"><path d="M3 5h5l-2.500 3z" fill="#333"/><path d="M11 3h4l1 1h3v5h-8z" fill="#e4b451"/><path d="M12 8l4-2 4 2v2l-4 2-4-2z" fill="#2529a8"/><path d="M6 8v4" stroke="#999" stroke-dasharray="1 1"/></svg>';
const leaf = '<svg viewBox="0 0 42 12"><path d="M5.500 0v12M16.500 0v12M17 6.500h4" stroke="#999" stroke-dasharray="1 1" fill="none"/><path d="M23 4l7-1v6l-7 2z" fill="#4877c9" stroke="#30477f" stroke-width=".7"/><path d="M28 3v7" stroke="#30477f" stroke-width=".7"/><path d="M33 3.500l6-1v7l-6 1zM36 3v7M33 6.500h6" fill="#eee" stroke="#888" stroke-width=".8"/></svg>';
document.getElementById('rows').innerHTML = `<tr><td colspan="5"><span class="name root">${root}Components (169)</span></td></tr>` +
  names.map((n, i) => `<tr><td><span class="name">${leaf}${n}</span></td><td class="num">${i + 1}</td><td><span class="swatch${i ? '' : ' tan'}"></span></td><td class="num">0</td><td></td></tr>`).join('');
```
